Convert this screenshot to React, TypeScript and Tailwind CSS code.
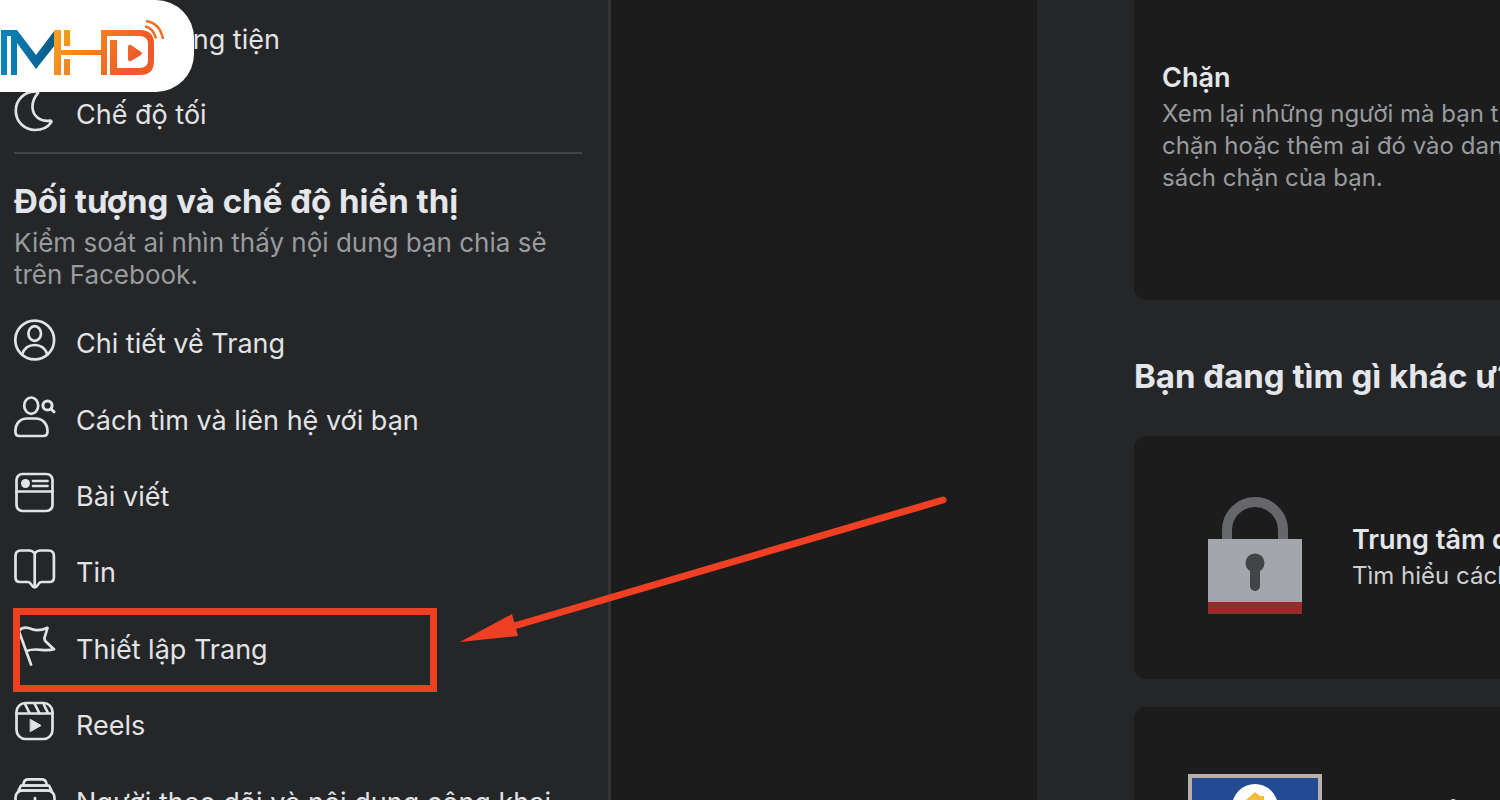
import type { ReactNode } from 'react';

function Icon({ children }: { children: ReactNode }) {
  return (
    <svg viewBox="0 0 42 42" className="h-[42px] w-[42px] shrink-0" fill="none" stroke="#e2e3e5" strokeWidth="2.7" strokeLinecap="round" strokeLinejoin="round" aria-hidden="true">
      {children}
    </svg>
  );
}

const icons = {
  media: <Icon><rect x="3" y="3" width="36" height="36" rx="6" /><path d="M16 14v14l12-7z" /></Icon>,
  moon: <Icon><path d="M23 1.800C10 .500 1.800 10.500 1.800 20.500c0 11.500 9 19.500 19.200 19.500 7.500 0 13-3 16-7.500.8-1.200.1-2-1.200-1.800C26 32 19 26 18.500 17.500 18.200 11.500 21 6.500 23.800 3.300c.6-.8.2-1.400-.8-1.500z" /></Icon>,
  profile: <Icon><circle cx="20.700" cy="21" r="19.400" /><ellipse cx="20.700" cy="14.500" rx="6.300" ry="7.300" /><path d="M8 35.500c2-6 6.500-9.500 12.700-9.500s10.700 3.500 12.700 9.500" /></Icon>,
  find: <Icon><ellipse cx="17.200" cy="9.700" rx="7" ry="8.200" /><path d="M1.400 35.500C1.400 27.500 6 22.500 13 22.500h8.500c7 0 12 5 12 13 0 3-1.500 4.500-4.200 4.500H5.500c-2.700 0-4.100-1.500-4.100-4.500z" /><circle cx="33.500" cy="9.500" r="4.600" strokeWidth="3" /><path d="m37 13 3 2.800" strokeWidth="3" /></Icon>,
  post: <Icon><rect x="2.500" y="2" width="36" height="37" rx="6" /><path d="M2.500 19.500h36" /><circle cx="11.500" cy="11.500" r="4.500" fill="#e2e3e5" stroke="none" /><path d="M19 9h14.500M19 14h14.500" /></Icon>,
  story: <Icon><path d="M20.700 5.500C19 3 17.500 2.500 15 2.500H7c-3.500 0-5.500 2-5.500 5.500v21.500c0 3 1.500 4.500 4.500 4.500h8c3.500 0 3.500 5.500 6.700 5.500s3.200-5.500 6.700-5.500h8c3 0 4.500-1.500 4.500-4.500V8c0-3.500-2-5.500-5.500-5.500h-8c-2.500 0-4 .5-5.700 3zM20.700 5.500v33" /></Icon>,
  flag: <Icon><path d="M17 39.500 4.500 5M5 5.500C9 1.500 13 2 17.500 4c5.500 2.300 10 1.500 16-1.200l-3 10c-.3 1.700.2 2.700 1.500 4l8 7.500c-10 3-18-2.500-27.500 1.800" /></Icon>,
  reels: <Icon><rect x="2.500" y="2" width="36" height="36" rx="9" /><path d="M2.500 12.500h36M11 3l4.500 9M20.500 2.500l5 10M30 4l4 8" /><path d="m16.500 18.500 10.500 6-10.500 6z" fill="#e2e3e5" strokeWidth="1" /></Icon>,
  followers: <Icon><path d="M9 7.500 10 4c.7-2 2-2.600 4-2.600h14c2 0 3.300.6 4 2.600l1 3.500z" /><path d="M4.500 12.500 7 7.500h28l2.500 5z" /><rect x="1.500" y="12.500" width="39" height="28" rx="7" /><path d="M21 20v14M14 27h14" /></Icon>,
};

function NavRow({ icon, label, marked }: { icon: ReactNode; label: string; marked?: boolean }) {
  return (
    <li className="relative">
      <a href="#" className="flex h-full items-center gap-5 whitespace-nowrap text-[27px] leading-8 font-normal text-[#e2e3e5]">
        <span className="pb-2">{icon}</span>
        {label}
      </a>
      {marked && <span className="absolute -top-1 -left-px h-[84px] w-[424px] border-[7px] border-[#ef4023]" />}
    </li>
  );
}

function Logo() {
  return (
    <div className="absolute top-0 left-0 h-[92px] w-[194px] rounded-r-[38px] bg-white">
      <svg viewBox="0 0 194 92" className="h-full w-full" role="img" aria-label="MHD">
        <defs>
          <linearGradient id="blue" x1="0" y1="0" x2="1" y2="0"><stop stopColor="#0a86bd" /><stop offset="1" stopColor="#075a86" /></linearGradient>
          <linearGradient id="orange" gradientUnits="userSpaceOnUse" x1="55" y1="30" x2="125" y2="75"><stop stopColor="#f6a21b" /><stop offset="1" stopColor="#f05a28" /></linearGradient>
        </defs>
        <path fill="url(#blue)" d="M1 30h16l19 25 19-25v15L36 69 17 43v32h-6V36H7v39H1z" />
        <path fill="url(#orange)" d="M54 30h7v20h40V30h39q14 0 14 14v17q0 14-14 14h-30V40h7v28h22q9 0 9-8V44q0-8-9-8h-32v39h-6V55H61v20h-7zM64 30h6v16h-6zM64 59h6v16h-6z" />
        <path fill="url(#orange)" d="M128 47q0-3 3-2l10 7q2 1 0 3l-10 6q-3 1-3-2z" />
        <path d="M145 26.500q8 1 11 12M146 21q14 2 17 18" fill="none" stroke="#f36f25" strokeWidth="2.600" />
      </svg>
    </div>
  );
}

function Padlock() {
  return (
    <svg viewBox="0 0 134 124" className="h-[124px] w-[134px] shrink-0" aria-hidden="true">
      <path d="M39 46V34a28 28 0 0 1 56 0v12" fill="none" stroke="#65676b" strokeWidth="10" />
      <path fill="#a3a6ab" d="M20 43h94v63H20z" />
      <path fill="#962b2b" d="M20 106h94v12H20z" />
      <circle cx="67" cy="67" r="9.500" fill="#414548" />
      <path d="M67 67v23" stroke="#414548" strokeWidth="10" strokeLinecap="round" />
    </svg>
  );
}

function HomeSign() {
  return (
    <svg viewBox="0 0 134 110" className="h-[110px] w-[134px] shrink-0" aria-hidden="true">
      <path fill="#224b93" stroke="#b9b0ae" strokeWidth="4" d="M2 2h130v106H2z" />
      <circle cx="67" cy="33" r="23" fill="#fff" />
      <path fill="#f0bd3f" d="m67 18 5 4h4v4l8 7h-5v15H55V33h-5z" />
    </svg>
  );
}

function HelpCard({ art, title, text }: { art: ReactNode; title: string; text: string }) {
  return (
    <section className="flex h-[243px] items-center gap-[30px] rounded-[12px] bg-[#1c1c1c] pl-[54px]">
      {art}
      <div className="whitespace-nowrap">
        <h3 className="text-[27px] leading-9 font-semibold">{title}</h3>
        <p className="text-[24px] leading-9 text-[#cfd0d3]">{text}</p>
      </div>
    </section>
  );
}

export default function App() {
  return (
    <div className="relative flex h-screen overflow-hidden bg-[#1c1c1c] font-['Inter','Noto_Sans',sans-serif] text-[#e4e6eb]">
      <aside className="w-[611px] shrink-0 border-r-[3px] border-[#333436] bg-[#252628] pr-[26px] pl-[14px]">
        <ul className="grid h-[154px] grid-rows-2 border-b-2 border-[#434446] pt-[2px]">
          <NavRow icon={icons.media} label="File phương tiện" />
          <NavRow icon={icons.moon} label="Chế độ tối" />
        </ul>
        <h2 className="mt-[27px] whitespace-nowrap text-[33px] leading-10 font-bold">Đối tượng và chế độ hiển thị</h2>
        <p className="mt-[6px] text-[26px] leading-8 text-[#999b9f]">Kiểm soát ai nhìn thấy nội dung bạn chia sẻ trên Facebook.</p>
        <ul className="mt-[15px] grid h-[535px] auto-rows-fr">
          <NavRow icon={icons.profile} label="Chi tiết về Trang" />
          <NavRow icon={icons.find} label="Cách tìm và liên hệ với bạn" />
          <NavRow icon={icons.post} label="Bài viết" />
          <NavRow icon={icons.story} label="Tin" />
          <NavRow icon={icons.flag} label="Thiết lập Trang" marked />
          <NavRow icon={icons.reels} label="Reels" />
          <NavRow icon={icons.followers} label="Người theo dõi và nội dung công khai" />
        </ul>
      </aside>

      <div className="w-[426px] shrink-0" />

      <main className="min-w-0 flex-1 overflow-hidden bg-[#252628] pl-[97px]">
        <div className="w-[480px]">
          <section className="h-[300px] rounded-b-[12px] bg-[#1c1c1c] px-7 pt-[62px]">
            <h3 className="text-[27px] leading-8 font-semibold">Chặn</h3>
            <p className="mt-1 w-[390px] text-[24px] leading-8 text-[#999b9f]">Xem lại những người mà bạn từng chặn hoặc thêm ai đó vào danh sách chặn của bạn.</p>
          </section>
          <h2 className="mt-14 whitespace-nowrap text-[33px] leading-10 font-bold">Bạn đang tìm gì khác ư?</h2>
          <div className="mt-10 grid gap-7">
            <HelpCard art={<Padlock />} title="Trung tâm quyền riêng tư" text="Tìm hiểu cách" />
            <HelpCard art={<HomeSign />} title="Trung tâm" text="Tìm hiểu" />
          </div>
        </div>
      </main>

      <svg viewBox="0 0 490 146" className="absolute top-[496px] left-[459px] h-[146px] w-[490px]" aria-hidden="true">
        <path d="M484 4 55 130" stroke="#ef4023" strokeWidth="7" strokeLinecap="round" />
        <path d="m1 146 52-28 6 22z" fill="#ef4023" />
      </svg>
      <Logo />
    </div>
  );
}
